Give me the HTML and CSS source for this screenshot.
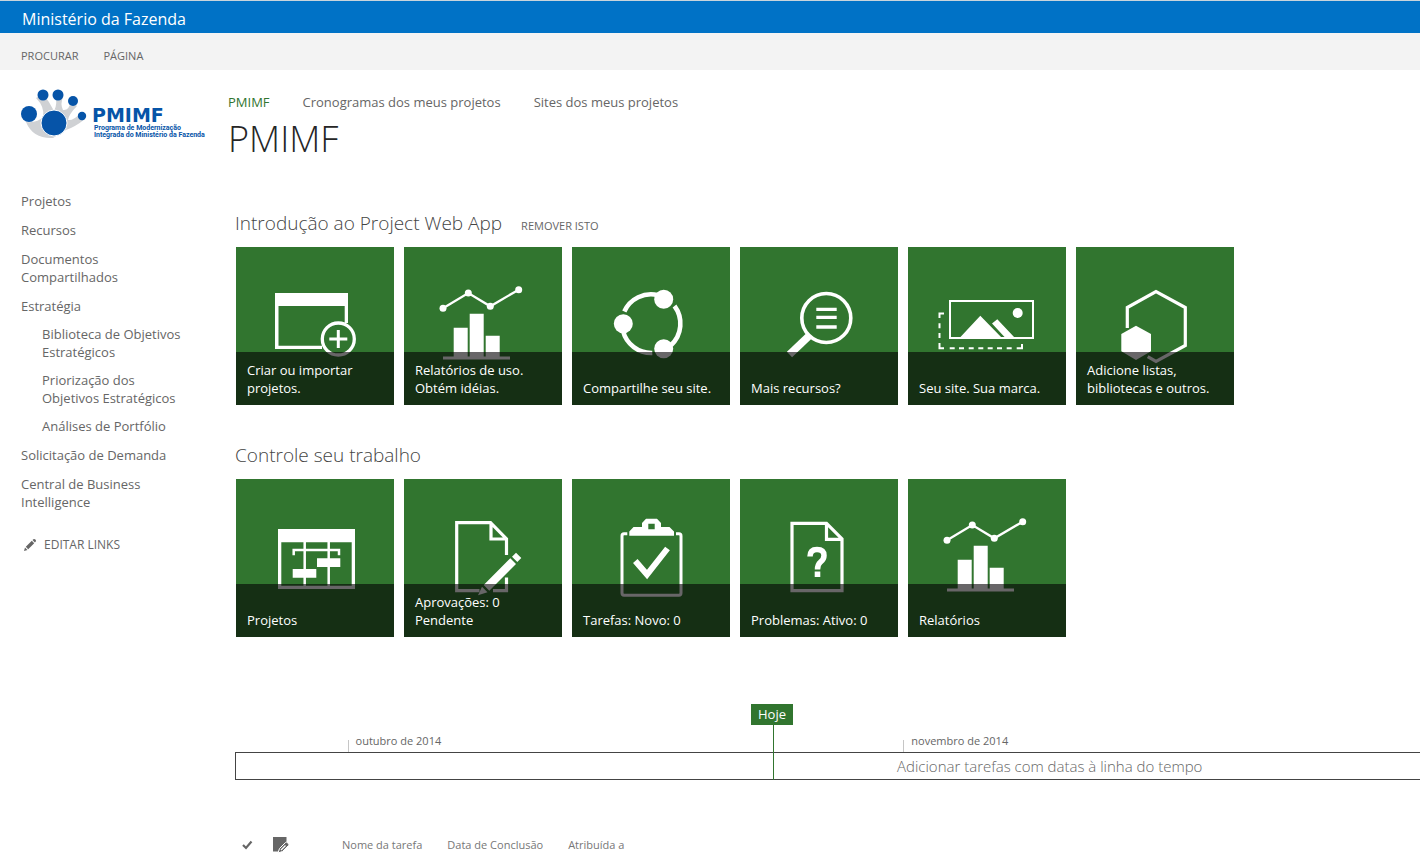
FILE: index.html
```html
<!DOCTYPE html>
<html lang="pt-BR">
<head>
<meta charset="utf-8">
<title>PMIMF</title>
<link rel="stylesheet" href="styles.css">
</head>
<body>
<div class="suite-bar">Ministério da Fazenda</div>
<div class="ribbon">
  <button type="button" class="ribbon-tab">PROCURAR</button>
  <button type="button" class="ribbon-tab">PÁGINA</button>
</div>
<div class="page">
  <aside class="sidebar">
    <a href="#" class="logo" aria-label="PMIMF">
      <svg width="188" height="52" viewBox="0 0 188 52">
        <path fill="#cfd1d4" d="M5 33 Q17 34 22 28 Q24 18 15 9 L22 5 Q28 12 33 22 Q37 15 34 5 L42 8 Q39 15 42 21 Q48 22 50 12 L56 17 Q48 25 47 31 Q52 32 60 24 L64 30 Q54 38 45 41 L32 49 Q12 50 5 33Z"/>
        <g fill="#0654a8">
          <circle cx="8" cy="25" r="8"/><circle cx="22" cy="6" r="5.5"/><circle cx="37" cy="6" r="5.5"/><circle cx="52" cy="12" r="5"/><circle cx="61" cy="27" r="4.2"/>
        </g>
        <circle cx="33" cy="34" r="13" fill="#0654a8" stroke="#fff" stroke-width="1"/>
        <text class="logo-name" x="71" y="33">PMIMF</text>
        <text class="logo-sub" x="73" y="41">Programa de Modernização</text>
        <text class="logo-sub" x="73" y="48">Integrada do Ministério da Fazenda</text>
      </svg>
    </a>
    <nav>
      <ul class="side-nav">
        <li><a href="#">Projetos</a></li>
        <li><a href="#">Recursos</a></li>
        <li><a href="#">Documentos Compartilhados</a></li>
        <li><a href="#">Estratégia</a>
          <ul class="sub-nav">
            <li><a href="#">Biblioteca de Objetivos Estratégicos</a></li>
            <li><a href="#">Priorização dos<br>Objetivos Estratégicos</a></li>
            <li><a href="#">Análises de Portfólio</a></li>
          </ul>
        </li>
        <li><a href="#">Solicitação de Demanda</a></li>
        <li><a href="#">Central de Business Intelligence</a></li>
      </ul>
      <a href="#" class="edit-links">
        <svg width="14" height="14" viewBox="0 0 14 14" fill="#666"><path d="M1 13 L2 9.500 L4.500 12Z M2.800 8.800 L8.800 2.800 L11.200 5.200 L5.200 11.200Z M9.500 2.100 L10.400 1.200 Q11.400 .6 12.400 1.600 Q13.400 2.600 12.800 3.600 L11.900 4.500Z"/></svg>
        EDITAR LINKS
      </a>
    </nav>
  </aside>
  <main class="main">
    <nav class="top-nav">
      <a href="#" class="current">PMIMF</a>
      <a href="#">Cronogramas dos meus projetos</a>
      <a href="#">Sites dos meus projetos</a>
    </nav>
    <h1 class="title">PMIMF</h1>
    <div class="content">
      <section class="section">
        <div class="section-head">
          <h2>Introdução ao Project Web App</h2>
          <a href="#" class="remove">REMOVER ISTO</a>
        </div>
        <div class="tiles">
          <a href="#" class="tile">
            <svg class="art" viewBox="0 0 158 158">
              <path fill="#fff" fill-rule="evenodd" d="M39 46 H112 V76 H108.700 V59 H42.500 V98.700 H86 V102 H39Z"/>
              <circle cx="102.300" cy="92" r="16" fill="#31752f" stroke="#fff" stroke-width="3.300"/>
              <path stroke="#fff" stroke-width="3" d="M93.300 92 H111.300 M102.300 83 V101"/>
            </svg>
            <span class="caption">Criar ou importar projetos.</span>
          </a>
          <a href="#" class="tile">
            <svg class="art" viewBox="0 0 158 158">
              <g id="chart" fill="#fff">
                <path fill="none" stroke="#fff" stroke-width="2.300" d="M39 61.300 L64.300 46 L86.300 59.300 L114.700 42.700"/>
                <circle cx="39" cy="61.300" r="3.500"/><circle cx="64.300" cy="46" r="3.500"/><circle cx="86.300" cy="59.300" r="3.500"/><circle cx="114.700" cy="42.700" r="3.500"/>
                <path d="M49.700 80.700 H63.700 V109.500 H49.700Z M65.700 66.700 H79.700 V109.500 H65.700Z M81.700 88.700 H95.700 V109.500 H81.700Z M39 109.500 H106 V112.500 H39Z"/>
              </g>
            </svg>
            <span class="caption">Relatórios de uso. Obtém idéias.</span>
          </a>
          <a href="#" class="tile">
            <svg class="art" viewBox="0 0 158 158">
              <g fill="#fff"><circle cx="51.300" cy="76.700" r="9.500"/><circle cx="91.700" cy="52.300" r="9.500"/><circle cx="91.700" cy="101.700" r="9.500"/></g>
              <path fill="none" stroke="#fff" stroke-width="4.600" d="M52.300 64.500 A29.400 29.400 0 0 1 86 48.200 M102.500 59 A29.400 29.400 0 0 1 99 98.200 M80.300 106 A29.400 29.400 0 0 1 51 84"/>
            </svg>
            <span class="caption">Compartilhe seu site.</span>
          </a>
          <a href="#" class="tile">
            <svg class="art" viewBox="0 0 158 158">
              <g fill="none" stroke="#fff"><circle cx="86.300" cy="71" r="24.500" stroke-width="3.600"/>
              <path stroke-width="3.300" d="M76.300 62.300 H96.700 M76.300 70.300 H96.700 M76.300 80 H96.700"/>
              <path stroke-width="7.500" d="M70 88 L49.500 107.500"/></g>
            </svg>
            <span class="caption">Mais recursos?</span>
          </a>
          <a href="#" class="tile">
            <svg class="art" viewBox="0 0 158 158">
              <g fill="none" stroke="#fff" stroke-width="2"><path d="M42 54 H125 V91 H42Z"/>
              <path d="M36 66.500 H31.500 V71 M31.500 76.300 V81.300 M31.500 86 V91 M31.500 96 V101.300 H36 M41.700 101.300 H46.700 M51 101.300 H56 M60.700 101.300 H65.700 M70.300 101.300 H75.300 M79.700 101.300 H84.700 M89 101.300 H94 M98.700 101.300 H103.700 M108.700 101.300 H114 V97"/></g>
              <g fill="#fff"><circle cx="109.700" cy="66" r="5"/><path d="M52 90.500 L72.300 68.700 L93.500 90.500Z M84 76.500 L89.300 72.300 L106.500 90.500 H97Z"/></g>
            </svg>
            <span class="caption">Seu site. Sua marca.</span>
          </a>
          <a href="#" class="tile">
            <svg class="art" viewBox="0 0 158 158">
              <path fill="none" stroke="#fff" stroke-width="3.200" d="M51.300 81 V60.500 L80 44.500 L109.300 60.500 V98.500 L80 114.500 L71.700 109.700"/>
              <path fill="#fff" d="M60 78.700 L75 87 V104.300 L60 113 L45.300 104.300 V87Z"/>
            </svg>
            <span class="caption">Adicione listas, bibliotecas e outros.</span>
          </a>
        </div>
      </section>
      <section class="section">
        <div class="section-head"><h2>Controle seu trabalho</h2></div>
        <div class="tiles">
          <a href="#" class="tile">
            <svg class="art" viewBox="0 0 158 158">
              <path fill="#fff" fill-rule="evenodd" d="M42 50 H119 V110 H42Z M45.300 63.300 V106.700 H115.700 V63.300Z"/>
              <path fill="none" stroke="#fff" stroke-width="2.500" d="M68.700 63 V107 M92.700 63 V107 M57.700 76.300 V71 H103 V76.300"/>
              <path fill="#fff" d="M81 79.300 H104.300 V88 H81Z M56.700 90 H80.300 V98.700 H56.700Z"/>
            </svg>
            <span class="caption">Projetos</span>
          </a>
          <a href="#" class="tile">
            <svg class="art" viewBox="0 0 158 158">
              <path fill="none" stroke="#fff" stroke-width="3.200" d="M75.500 111.700 H52.700 V43.700 H86.500 L102.500 60 V76 M87 44 V60 H102 M102.500 98.500 V111.700 H89"/>
              <path fill="#fff" d="M112 73.700 L117.300 79 L113.300 83 L108 77.700Z M106.300 79.300 L112 85 L85.300 111.700 L79.700 106Z M78 107.700 L83.500 113.300 L74 116.300Z"/>
            </svg>
            <span class="caption">Aprovações: 0 Pendente</span>
          </a>
          <a href="#" class="tile">
            <svg class="art" viewBox="0 0 158 158">
              <path fill="none" stroke="#fff" stroke-width="3" d="M55.300 54.800 H52 Q50 54.800 50 57 V114 Q50 116.200 52 116.200 H107 Q109 116.200 109 114 V57 Q109 54.800 107 54.800 H104"/>
              <path fill="#fff" fill-rule="evenodd" d="M57.300 56.700 V52.500 L61.500 48 H70 V44 L74 39.700 H85 L89 44 V48 H97.500 L102 52.500 V56.700Z M76.300 44.700 V50.300 H82.700 V44.700Z"/>
              <path fill="none" stroke="#fff" stroke-width="6" d="M63.300 82 L75 95.500 L95.500 69.500"/>
            </svg>
            <span class="caption">Tarefas: Novo: 0</span>
          </a>
          <a href="#" class="tile">
            <svg class="art" viewBox="0 0 158 158">
              <path fill="none" stroke="#fff" stroke-width="3.200" d="M52 44.300 H86.500 L102 60 V111.700 H52Z M86.500 44.300 V60.300 H102"/>
              <path fill="none" stroke="#fff" stroke-width="5.500" d="M70 77.500 Q70 70.500 77 70.500 Q84 70.500 84 76.500 Q84 80.500 80.500 83 Q77.500 85.500 77.500 90.500"/>
              <path fill="#fff" d="M74.700 92.500 H80.300 V98 H74.700Z"/>
            </svg>
            <span class="caption">Problemas: Ativo: 0</span>
          </a>
          <a href="#" class="tile">
            <svg class="art" viewBox="0 0 158 158"><use href="#chart"/></svg>
            <span class="caption">Relatórios</span>
          </a>
        </div>
      </section>
      <section class="timeline">
        <div class="scale">
          <span class="month" style="left:9.500%">outubro de 2014</span>
          <span class="month" style="left:56.400%">novembro de 2014</span>
        </div>
        <div class="track">Adicionar tarefas com datas à linha do tempo</div>
        <div class="today" style="left:45.400%"><span class="today-label">Hoje</span></div>
      </section>
      <table class="tasks">
        <thead>
          <tr>
            <th class="col-check"><svg width="11" height="10" viewBox="0 0 11 10"><path fill="none" stroke="#666" stroke-width="2.200" d="M1 5 L4 8 L9.500 1.500"/></svg></th>
            <th class="col-edit"><svg width="18" height="18" viewBox="0 0 18 18"><path fill="#666" d="M1 1 H14.500 V6 L6 15.500 H1Z"/><path fill="#666" stroke="#fff" d="M6 17 L7.500 12.500 L13.500 6.500 Q14.500 5.500 16 7 Q17.500 8.500 16.500 9.500 L10.500 15.500Z"/><path stroke="#fff" stroke-width="1.300" d="M9 14 L13.500 9.500"/></svg></th>
            <th>Nome da tarefa</th>
            <th>Data de Conclusão</th>
            <th>Atribuída a</th>
          </tr>
        </thead>
      </table>
    </div>
  </main>
</div>
</body>
</html>
```
FILE: styles.css
```css
* { box-sizing: border-box; }
body {
  margin: 0;
  background: #fff;
  color: #666;
  font: 13px/18px "Segoe UI", "Open Sans", "Noto Sans", sans-serif;
}
a { color: inherit; text-decoration: none; }
h1, h2 { margin: 0; font-weight: 300; }
ul { margin: 0; padding: 0; list-style: none; }

.suite-bar {
  height: 33px;
  padding-left: 22px;
  border-top: 1px solid #c8d4dc;
  background: #0072c6;
  color: #fff;
  font-size: 16px;
  line-height: 36px;
}
.ribbon {
  display: flex;
  gap: 25px;
  height: 37px;
  padding: 9px 21px 0;
  background: #f3f3f3;
}
.ribbon-tab {
  padding: 0;
  border: 0;
  background: none;
  color: #666;
  font: inherit;
  font-size: 11px;
}

.page { display: flex; }
.sidebar { flex: none; width: 228px; padding: 19px 20px 0 21px; }
.logo { display: block; height: 103px; }
.logo svg { overflow: visible; }
.logo-name { font: bold 19px "DejaVu Sans", sans-serif; fill: #0654a8; }
.logo-sub { font: bold 7px Roboto, sans-serif; fill: #0654a8; }
.side-nav { display: flex; flex-direction: column; gap: 11px; width: 150px; }
.side-nav a { display: block; }
.sub-nav {
  display: flex;
  flex-direction: column;
  gap: 10px;
  width: 150px;
  margin-left: 21px;
  padding-top: 10px;
}
.edit-links {
  display: flex;
  align-items: center;
  gap: 7px;
  margin-top: 25px;
  padding-left: 2px;
  font-size: 12px;
}

.main { flex: 1; min-width: 0; padding-top: 23px; }
.top-nav { display: flex; gap: 33px; }
.current { color: #31752f; }
.title { color: #262626; font-size: 36px; line-height: 56px; }
.content { padding: 40px 0 0 7px; }
.section { margin-bottom: 34px; }
.section-head { display: flex; align-items: baseline; gap: 19px; height: 40px; }
.section-head h2 { color: #444; font-size: 19px; line-height: 32px; }
.remove { font-size: 11px; }
.tiles { display: flex; flex-wrap: wrap; gap: 10px; padding-left: 1px; }
.tile {
  position: relative;
  width: 158px;
  height: 158px;
  background: #31752f;
  color: #fff;
}
.art { display: block; width: 100%; height: 100%; }
.caption {
  position: absolute;
  right: 0;
  bottom: 0;
  left: 0;
  display: flex;
  align-items: flex-end;
  height: 53px;
  padding: 0 11px 8px;
  background: rgba(4, 0, 4, 0.6);
}

.timeline { position: relative; padding-top: 36px; margin-top: 67px; }
.scale { position: relative; height: 12px; }
.month {
  position: absolute;
  top: 0;
  height: 12px;
  padding-left: 7px;
  border-left: 1px solid #c6c6c6;
  font-size: 11px;
  line-height: 1px;
  white-space: nowrap;
}
.track {
  height: 28px;
  padding-left: 661px;
  border: 1px solid #444;
  border-right: 0;
  color: #666;
  font-size: 15px;
  font-weight: 300;
  line-height: 27px;
  white-space: nowrap;
}
.today { position: absolute; top: 0; bottom: 0; border-left: 1px solid #31752f; }
.today-label {
  position: absolute;
  top: 0;
  left: -23px;
  padding: 1px 7px 2px;
  background: #31752f;
  color: #fff;
}

.tasks { margin-top: 56px; border-collapse: collapse; }
.tasks th {
  padding: 0 25px 0 0;
  color: #777;
  font-size: 11px;
  font-weight: 400;
  text-align: left;
  vertical-align: middle;
}
.tasks svg { display: block; }
.tasks .col-check { width: 37px; padding: 0 0 0 7px; }
.tasks .col-edit { width: 70px; padding: 0; }
```
